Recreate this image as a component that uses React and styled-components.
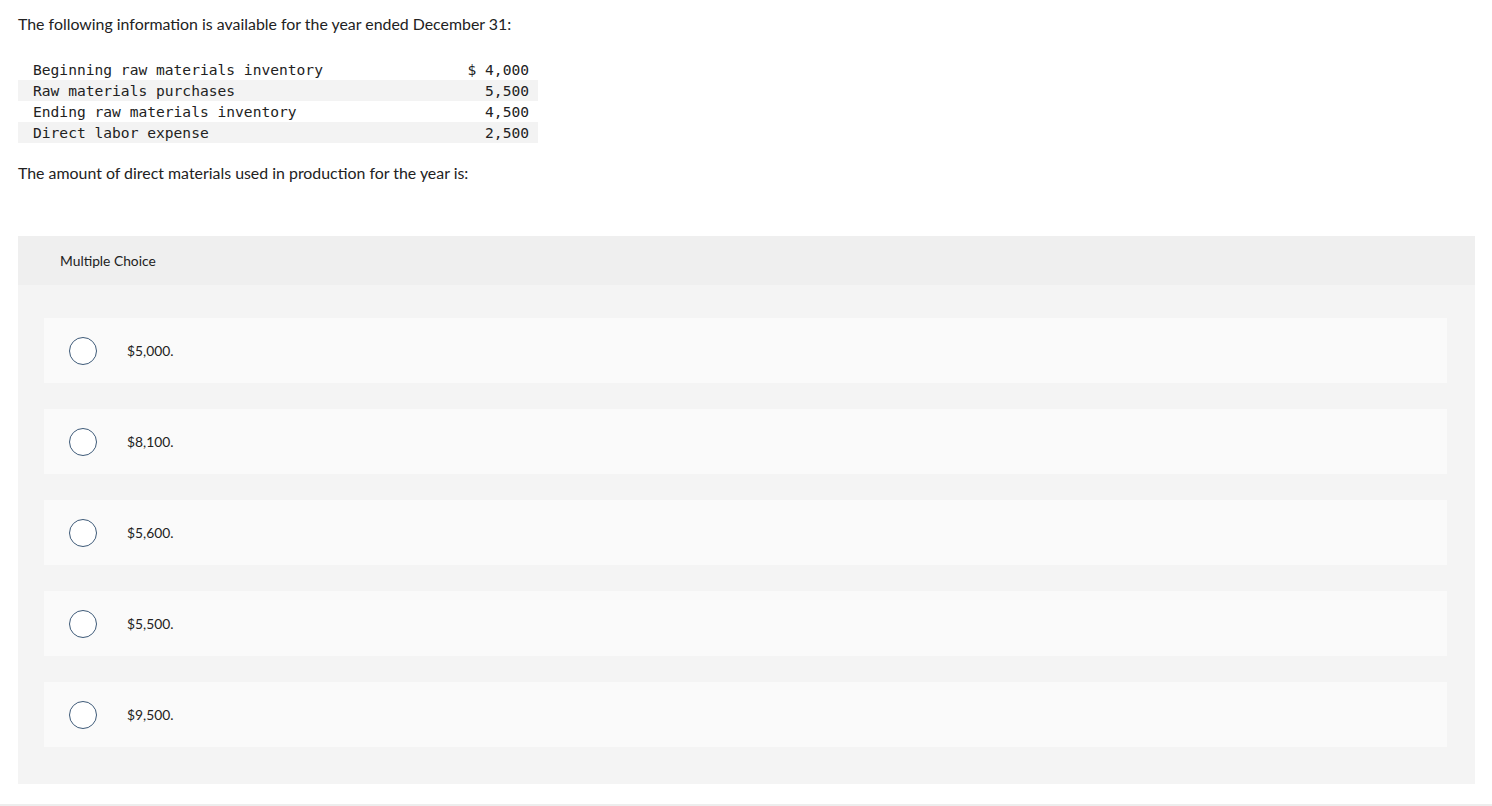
import React from 'react';
import styled, { createGlobalStyle } from 'styled-components';

const GlobalStyle = createGlobalStyle`
  html, body {
    margin: 0;
    padding: 0;
    background: #fff;
  }
  body {
    font-family: Lato, "Liberation Sans", Arial, sans-serif;
    color: #222;
  }
`;

const Page = styled.div`
  padding: 14px 17px 0 18px;
  border-bottom: 2px solid #ededed;
  height: 806px;
  box-sizing: border-box;
`;

const Prompt = styled.p`
  margin: 0;
  font-size: 15.9px;
  line-height: 20px;
  color: #222;
  margin-top: ${(p) => p.top || 0}px;
`;

const DataTable = styled.table`
  border-collapse: collapse;
  margin-top: 25px;
  width: 520px;
  font-family: "DejaVu Sans Mono", "Liberation Mono", monospace;
  font-size: 14.6px;
  color: #222;
`;

const Row = styled.tr`
  background: ${(p) => (p.shaded ? '#f3f3f3' : 'transparent')};
  height: 21px;
`;

const Label = styled.td`
  padding: 0 0 0 15px;
  white-space: pre;
`;

const Amount = styled.td`
  padding: 0 9px 0 0;
  text-align: right;
  white-space: pre;
`;

const Panel = styled.section`
  margin-top: 53px;
  background: #f4f4f4;
  width: 1457px;
  padding-bottom: 37px;
`;

const PanelHeader = styled.div`
  height: 49px;
  background: #efefef;
  display: flex;
  align-items: center;
  padding-left: 42px;
  font-size: 13.8px;
  color: #222;
`;

const Options = styled.div`
  display: flex;
  flex-direction: column;
  gap: 26px;
  padding: 33px 28px 0 26px;
`;

const Option = styled.label`
  height: 65px;
  background: #fafafa;
  display: flex;
  align-items: center;
  padding-left: 25px;
  font-size: 13.8px;
  color: #222;
  cursor: pointer;
`;

const Radio = styled.span`
  width: 26px;
  height: 26px;
  border: 1.5px solid #3e5a78;
  border-radius: 50%;
  background: #fff;
  flex: none;
  margin-right: 30px;
`;

const rows = [
  ['Beginning raw materials inventory', '$ 4,000'],
  ['Raw materials purchases', '5,500'],
  ['Ending raw materials inventory', '4,500'],
  ['Direct labor expense', '2,500'],
];

const choices = ['$5,000.', '$8,100.', '$5,600.', '$5,500.', '$9,500.'];

const App = () => (
  <>
    <GlobalStyle />
    <Page>
      <Prompt>The following information is available for the year ended December 31:</Prompt>
      <DataTable>
        <tbody>
          {rows.map(([label, amount], i) => (
            <Row key={label} shaded={i % 2 === 1}>
              <Label>{label}</Label>
              <Amount>{amount}</Amount>
            </Row>
          ))}
        </tbody>
      </DataTable>
      <Prompt top={20}>The amount of direct materials used in production for the year is:</Prompt>
      <Panel>
        <PanelHeader>Multiple Choice</PanelHeader>
        <Options>
          {choices.map((c) => (
            <Option key={c}>
              <Radio />
              {c}
            </Option>
          ))}
        </Options>
      </Panel>
    </Page>
  </>
);

export default App;
